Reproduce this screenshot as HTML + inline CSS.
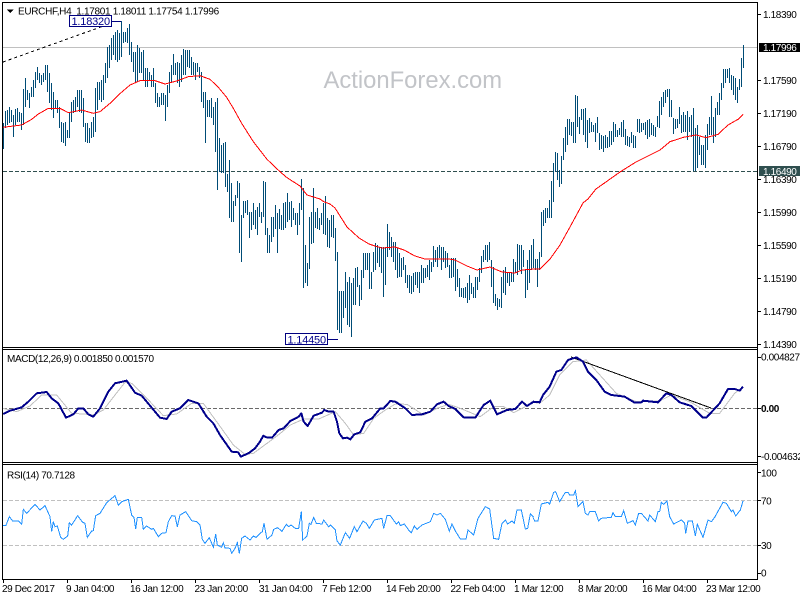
<!DOCTYPE html>
<html><head><meta charset="utf-8"><title>EURCHF,H4</title>
<style>
html,body{margin:0;padding:0;background:#fff;width:800px;height:600px;overflow:hidden}
svg{display:block}
text{font-family:"Liberation Sans",sans-serif;font-size:10px;letter-spacing:-.38px;fill:#000}
</style></head><body>
<svg width="800" height="600" viewBox="0 0 800 600" xmlns="http://www.w3.org/2000/svg">
<rect width="800" height="600" fill="#fff"/>
<g shape-rendering="crispEdges" fill="none">
<path d="M3 47.5H758" stroke="#c0c0c0"/>
<path d="M3 171.5H758" stroke="#2f4f4f" stroke-dasharray="4 2"/>
<path d="M3 408.5H758" stroke="#696969" stroke-dasharray="4 2"/>
<path d="M3 500.5H758M3 545.5H758" stroke="#c0c0c0" stroke-dasharray="4 2"/>
<path d="M3 62L112 23" stroke="#000" stroke-dasharray="3 3"/>
<path d="M111 21.5H121M328 339.5H338" stroke="#000080"/>
<g transform="translate(.5 0)" stroke="#004c76">
<path d="M3 123V149M5 111V128M7 110V125M9 107V123M11 110V122M13 115V137M15 109V125M17 108V122M19 112V122M21 113V130M23 89V125M25 78V107M27 90V100M29 93V108M31 87V97M33 80V97M35 72V88M37 67V80M39 73V83M41 75V85M43 73V82M45 65V80M47 65V92M49 73V103M51 83V110M53 92V118M55 100V108M57 100V113M59 107V128M61 122V142M63 123V143M65 122V146M67 130V138M69 113V138M71 102V122M73 100V113M75 97V112M77 90V107M79 90V112M81 90V113M83 98V127M85 123V142M87 123V143M89 128V143M91 122V138M93 117V137M95 88V132M97 82V110M99 82V100M101 80V102M103 75V100M105 63V83M107 47V78M109 45V68M111 38V60M113 35V55M115 32V60M117 30V62M119 33V60M121 21V57M123 32V43M125 32V42M127 28V43M129 24V55M131 42V62M133 52V72M135 52V82M137 45V82M139 48V73M141 52V73M143 50V80M145 68V87M147 68V87M149 72V80M151 75V87M153 68V87M155 83V103M157 93V107M159 97V107M161 93V105M163 93V105M165 95V121M167 85V107M169 72V93M171 65V83M173 54V75M175 63V75M177 62V83M179 63V87M181 55V82M183 49V75M185 50V75M187 50V67M189 50V68M191 57V75M193 62V75M195 63V80M197 63V72M199 67V78M201 72V102M203 92V108M205 92V143M207 100V117M209 100V117M211 98V118M213 107V125M215 102V152M217 98V190M219 138V172M221 145V173M223 143V173M225 142V187M227 174V192M229 160V218M231 183V222M233 201V222M235 195V206M237 181V198M239 183V253M241 215V262M243 201V218M245 201V213M247 200V215M249 212V238M251 212V230M253 203V225M255 210V229M257 207V235M259 203V217M261 212V223M263 181V217M265 182V235"/>
<path d="M267 228V253M269 235V253M271 217V242M273 217V237M275 205V229M277 213V253M279 209V229M281 215V230M283 203V230M285 202V228M287 193V222M289 202V220M291 201V227M293 208V220M295 213V225M297 213V235M299 203V225M301 179V210M303 188V288M305 245V283M307 263V286M309 217V269M311 212V244M313 188V243M315 212V228M317 208V229M319 218V230M321 213V225M323 203V234M325 196V235M327 218V247M329 220V248M331 215V237M333 215V238M335 228V261M337 252V330M339 291V333M341 291V333M343 291V318M345 272V308M347 282V325M349 277V327M351 283V337M353 278V305M355 268V305M357 267V287M359 285V306M361 270V300M363 253V278M365 253V270M367 253V270M369 253V289M371 272V289M373 252V272M375 243V270M377 245V263M379 247V267M381 247V273M383 247V297M385 247V285M387 224V257M389 232V250M391 237V257M393 242V262M395 242V270M397 248V278M399 253V277M401 258V277M403 257V270M405 265V283M407 275V288M409 275V293M411 276V294M413 273V292M415 272V285M417 272V288M419 272V293M421 265V283M423 268V283M425 268V278M427 265V277M429 260V280M431 262V272M433 246V267M435 250V262M437 247V267M439 245V258M441 247V270M443 247V262M445 251V268M447 253V267M449 265V278M451 258V278M453 258V277M455 258V291M457 269V287M459 278V297M461 288V297M463 288V298M465 287V298M467 283V303M469 275V300M471 283V294M473 287V298M475 277V298M477 277V290M479 268V282M481 256V273M483 250V262M485 245V260M487 245V262M489 242V260M491 260V287M493 267V303M495 294V306M497 298V310M499 299V307M501 277V308M503 270V293M505 267V295M507 272V283M509 273V286M511 273V282M513 259V282M515 262V273M517 244V275M519 245V270M521 245V274M523 250V267M525 270V298M527 260V290M529 250V283M531 245V270M533 239V268"/>
<path d="M535 259V270M537 259V287M539 252V270M541 212V257M543 210V226M545 208V223M547 208V218M549 200V218M551 181V218M553 163V202M555 152V172M557 153V180M559 170V187M561 156V184M563 138V160M565 127V152M567 119V145M569 119V135M571 122V136M573 122V143M575 95V143M577 96V127M579 117V134M581 109V120M583 109V135M585 108V142M587 120V148M589 118V133M591 122V132M593 125V132M595 123V142M597 117V133M599 133V150M601 135V149M603 136V152M605 135V148M607 137V148M609 131V147M611 131V145M613 122V142M615 124V137M617 130V137M619 128V135M621 122V137M623 120V137M625 129V145M627 136V146M629 137V147M631 132V143M633 135V148M635 136V148M637 119V132M639 119V133M641 123V132M643 123V130M645 122V135M647 120V139M649 119V137M651 123V135M653 125V136M655 127V137M657 116V127M659 101V128M661 97V115M663 92V107M665 90V103M667 89V97M669 89V117M671 100V117M673 118V134M675 119V129M677 119V128M679 107V124M681 115V133M683 112V132M685 115V132M687 111V140M689 117V132M691 115V137M693 108V171M695 128V171M697 125V168M699 137V155M701 145V165M703 145V165M705 135V168M707 124V150M709 117V135M711 96V135M713 117V143M715 108V137M717 102V115M719 93V115M721 83V100M723 69V88M725 69V83M727 69V78M729 68V83M731 75V90M733 76V95M735 78V100M737 87V103M739 79V90M741 58V87M743 45V68"/>
</g>
<!-- moving average -->
<polyline transform="scale(.33333)" stroke="#ff0000" stroke-width="3" points="9,382 65,375 95,358 115,342 145,325 180,325 205,338 245,330 280,340 300,335 330,310 355,285 390,255 420,242 465,242 495,252 530,243 565,230 600,227 630,238 655,262 680,292 700,325 725,370 760,425 801,478 840,515 861,533 900,558 921,585 960,597 971,605 990,612 1005,624 1041,681 1077,714 1107,732 1125,738 1146,744 1185,741 1212,750 1245,768 1275,777 1317,777 1347,777 1365,780 1401,798 1431,810 1470,801 1506,816 1545,819 1566,810 1602,807 1620,807 1650,777 1680,735 1710,681 1749,609 1764,597 1788,567 1860,516 1908,486 1980,450 2010,425 2050,412 2088,405 2118,413 2154,403 2184,375 2214,358 2229,343"/>
<!-- MACD signal -->
<g fill="none" stroke="#c0c0c0" stroke-width="3">
<polyline transform="translate(0 345) scale(.33333)" points="9,190 50,200 90,183 125,150 170,150 215,205 250,207 280,210 310,195 345,150 375,112 395,115 450,170 490,212 530,207 575,175 610,175 650,230 700,300 735,328 760,325 801,295"/>
<polyline transform="translate(267 345) scale(.33333)" points="0,295 40,265 70,240 110,222 155,222 205,200 235,235 260,270 290,265 320,220 355,195 385,177 420,178 470,210 510,190 545,178 580,190 640,215 680,185 710,185 740,203 800,172"/>
<polyline transform="translate(533 345) scale(.33333)" points="0,172 20,175 50,150 80,90 120,50 160,45 205,95 250,145 310,170 380,168 415,150 470,170 530,205 560,205 605,145 630,125"/>
</g>
<path d="M571 357L711 408" stroke="#000"/>
<!-- MACD main -->
<g fill="none" stroke="#00008b" stroke-width="6" stroke-linejoin="round">
<polyline transform="translate(0 345) scale(.33333)" points="9,207 30,197 65,187 85,170 110,145 140,141 155,160 175,175 198,218 220,208 235,190 250,190 265,208 280,215 300,190 325,140 345,115 380,107 405,143 425,152 455,188 480,218 500,222 515,200 540,190 565,165 595,175 620,215 640,235 660,270 695,320 715,322 722,335 745,325 765,310 780,290 790,272 801,278"/>
<polyline transform="translate(267 345) scale(.33333)" points="0,278 15,278 35,255 50,250 70,228 95,215 103,205 110,230 122,243 140,212 165,203 172,195 185,200 200,200 210,230 217,265 228,280 240,278 250,283 262,268 280,262 295,230 315,220 340,190 350,190 370,168 385,170 415,190 435,210 465,208 490,200 510,178 530,170 545,183 565,192 590,217 625,218 650,180 670,167 690,208 720,195 745,192 765,170 780,183 800,170"/>
<polyline transform="translate(533 345) scale(.33333)" points="0,170 20,172 30,150 50,125 70,80 85,75 105,45 130,37 150,50 165,80 190,105 215,140 235,150 275,155 305,173 325,172 330,167 375,172 400,145 415,150 440,172 475,183 510,218 520,218 560,175 585,132 605,132 620,137 630,125"/>
</g>
<!-- RSI -->
<g fill="none" stroke="#1e90ff" stroke-width="3">
<polyline transform="translate(0 460) scale(.33333)" points="9,196 18,196 28,170 38,183 55,183 65,193 70,148 80,160 105,133 120,150 135,137 150,170 155,215 160,185 165,200 172,198 182,232 190,238 203,228 208,188 215,195 233,167 248,187 255,190 262,232 275,213 280,212 287,167 300,160 320,128 345,107 355,135 365,125 385,118 395,165 402,172 407,207 412,172 425,172 430,208 440,198 455,208 460,205 475,230 485,220 498,218 505,185 515,167 525,168 532,200 540,165 557,155 575,182 590,185 600,195 607,238 615,250 628,233 640,262 647,222 652,255 665,262 670,248 675,264 690,265 695,280 705,265 712,248 718,280 725,235 735,228 750,240 760,228 768,232 780,220 787,215 792,190 801,238"/>
<polyline transform="translate(267 460) scale(.33333)" points="0,238 15,225 20,208 32,203 45,214 58,193 65,200 72,195 85,205 95,205 103,155 107,240 120,228 127,190 132,193 140,172 148,190 165,192 170,180 185,200 190,195 205,210 210,243 220,255 235,218 248,235 262,200 270,215 288,183 298,190 307,205 322,180 345,175 350,205 360,167 370,167 388,192 395,185 400,197 412,192 425,210 433,218 442,198 450,208 465,195 490,185 500,160 510,165 520,160 535,178 547,213 555,192 565,213 580,237 597,237 603,210 620,225 633,175 655,140 668,147 680,235 695,238 705,190 715,180 722,192 735,183 742,190 750,150 763,150 775,207 782,205 790,162 800,172"/>
<polyline transform="translate(533 460) scale(.33333)" points="0,172 5,183 15,183 25,132 45,127 50,132 62,97 68,95 80,125 97,97 105,97 110,105 122,105 127,92 135,140 150,125 157,160 165,165 170,155 187,155 197,183 205,175 235,172 240,158 247,170 265,170 272,152 283,190 300,182 307,195 317,160 325,160 345,183 350,165 367,185 375,155 380,155 385,127 392,133 402,123 410,170 422,192 445,180 455,190 458,220 465,183 478,183 487,228 493,193 510,232 525,180 535,185 545,172 570,127 580,130 595,155 600,150 608,168 622,150 630,123"/>
</g>
<!-- frames -->
<path d="M2.5 2V579M2 2.5H758M2 347.5H758M2 349.5H758M2 462.5H758M2 464.5H758M2 579.5H758M757.5 2V580" stroke="#000"/>
<path d="M758 14.5h3M758 80.5h3M758 113.5h3M758 146.5h3M758 179.5h3M758 212.5h3M758 245.5h3M758 278.5h3M758 311.5h3M758 344.5h3M758 357.5h3M758 408.5h3M758 456.5h3M758 472.5h3M758 500.5h3M758 545.5h3M758 573.5h3" stroke="#000"/>
<path d="M3.5 580v3M67.5 580v3M131.5 580v3M195.5 580v3M259.5 580v3M323.5 580v3M387.5 580v3M451.5 580v3M515.5 580v3M579.5 580v3M643.5 580v3M707.5 580v3" stroke="#000"/>
<rect x="69.5" y="15.5" width="42" height="11" stroke="#000080" fill="#fff"/>
<rect x="285.5" y="333.5" width="42" height="11" stroke="#000080" fill="#fff"/>
<rect x="759" y="43" width="41" height="9" fill="#000"/>
<rect x="759" y="166" width="41" height="10" fill="#2f4f4f"/>
<path d="M7 9.5h6.5L10.2 13z" fill="#000"/>
</g>
<text x="323.5" y="88" style="font-size:23.8px;letter-spacing:0;fill:#c2c4c8">ActionForex.com</text>
<text x="18" y="14.5" style="letter-spacing:-.31px" xml:space="preserve">EURCHF,H4  1.17801 1.18011 1.17754 1.17996</text>
<text x="71.5" y="25" style="font-size:11px;fill:#00008b;letter-spacing:-.2px">1.18320</text>
<text x="287.5" y="343.5" style="font-size:11px;fill:#00008b;letter-spacing:-.2px">1.14450</text>
<g>
<text x="763" y="18">1.18390</text>
<text x="763" y="51" style="fill:#fff">1.17996</text>
<text x="763" y="84">1.17590</text>
<text x="763" y="117">1.17190</text>
<text x="763" y="150">1.16790</text>
<text x="763" y="183">1.16390</text>
<text x="763" y="175" style="fill:#fff">1.16490</text>
<text x="763" y="216">1.15990</text>
<text x="763" y="249">1.15590</text>
<text x="763" y="282">1.15190</text>
<text x="763" y="315">1.14790</text>
<text x="763" y="348">1.14390</text>
<text x="761" y="360.5">0.004827</text>
<text x="761" y="412" style="font-weight:bold">0.00</text>
<text x="761" y="460">-0.004632</text>
<text x="761" y="476.5">100</text>
<text x="761" y="504.5">70</text>
<text x="761" y="549">30</text>
<text x="761" y="576.5">0</text>
<text x="7" y="362">MACD(12,26,9) 0.001850 0.001570</text>
<text x="7" y="478.5">RSI(14) 70.7128</text>
<text x="2" y="592">29 Dec 2017</text>
<text x="66" y="592">9 Jan 04:00</text>
<text x="130" y="592">16 Jan 12:00</text>
<text x="194.5" y="592">23 Jan 20:00</text>
<text x="259" y="592">31 Jan 04:00</text>
<text x="322" y="592">7 Feb 12:00</text>
<text x="386" y="592">14 Feb 20:00</text>
<text x="450.5" y="592">22 Feb 04:00</text>
<text x="514" y="592">1 Mar 12:00</text>
<text x="578" y="592">8 Mar 20:00</text>
<text x="642" y="592">16 Mar 04:00</text>
<text x="706" y="592">23 Mar 12:00</text>
</g>
</svg>
</body></html>
